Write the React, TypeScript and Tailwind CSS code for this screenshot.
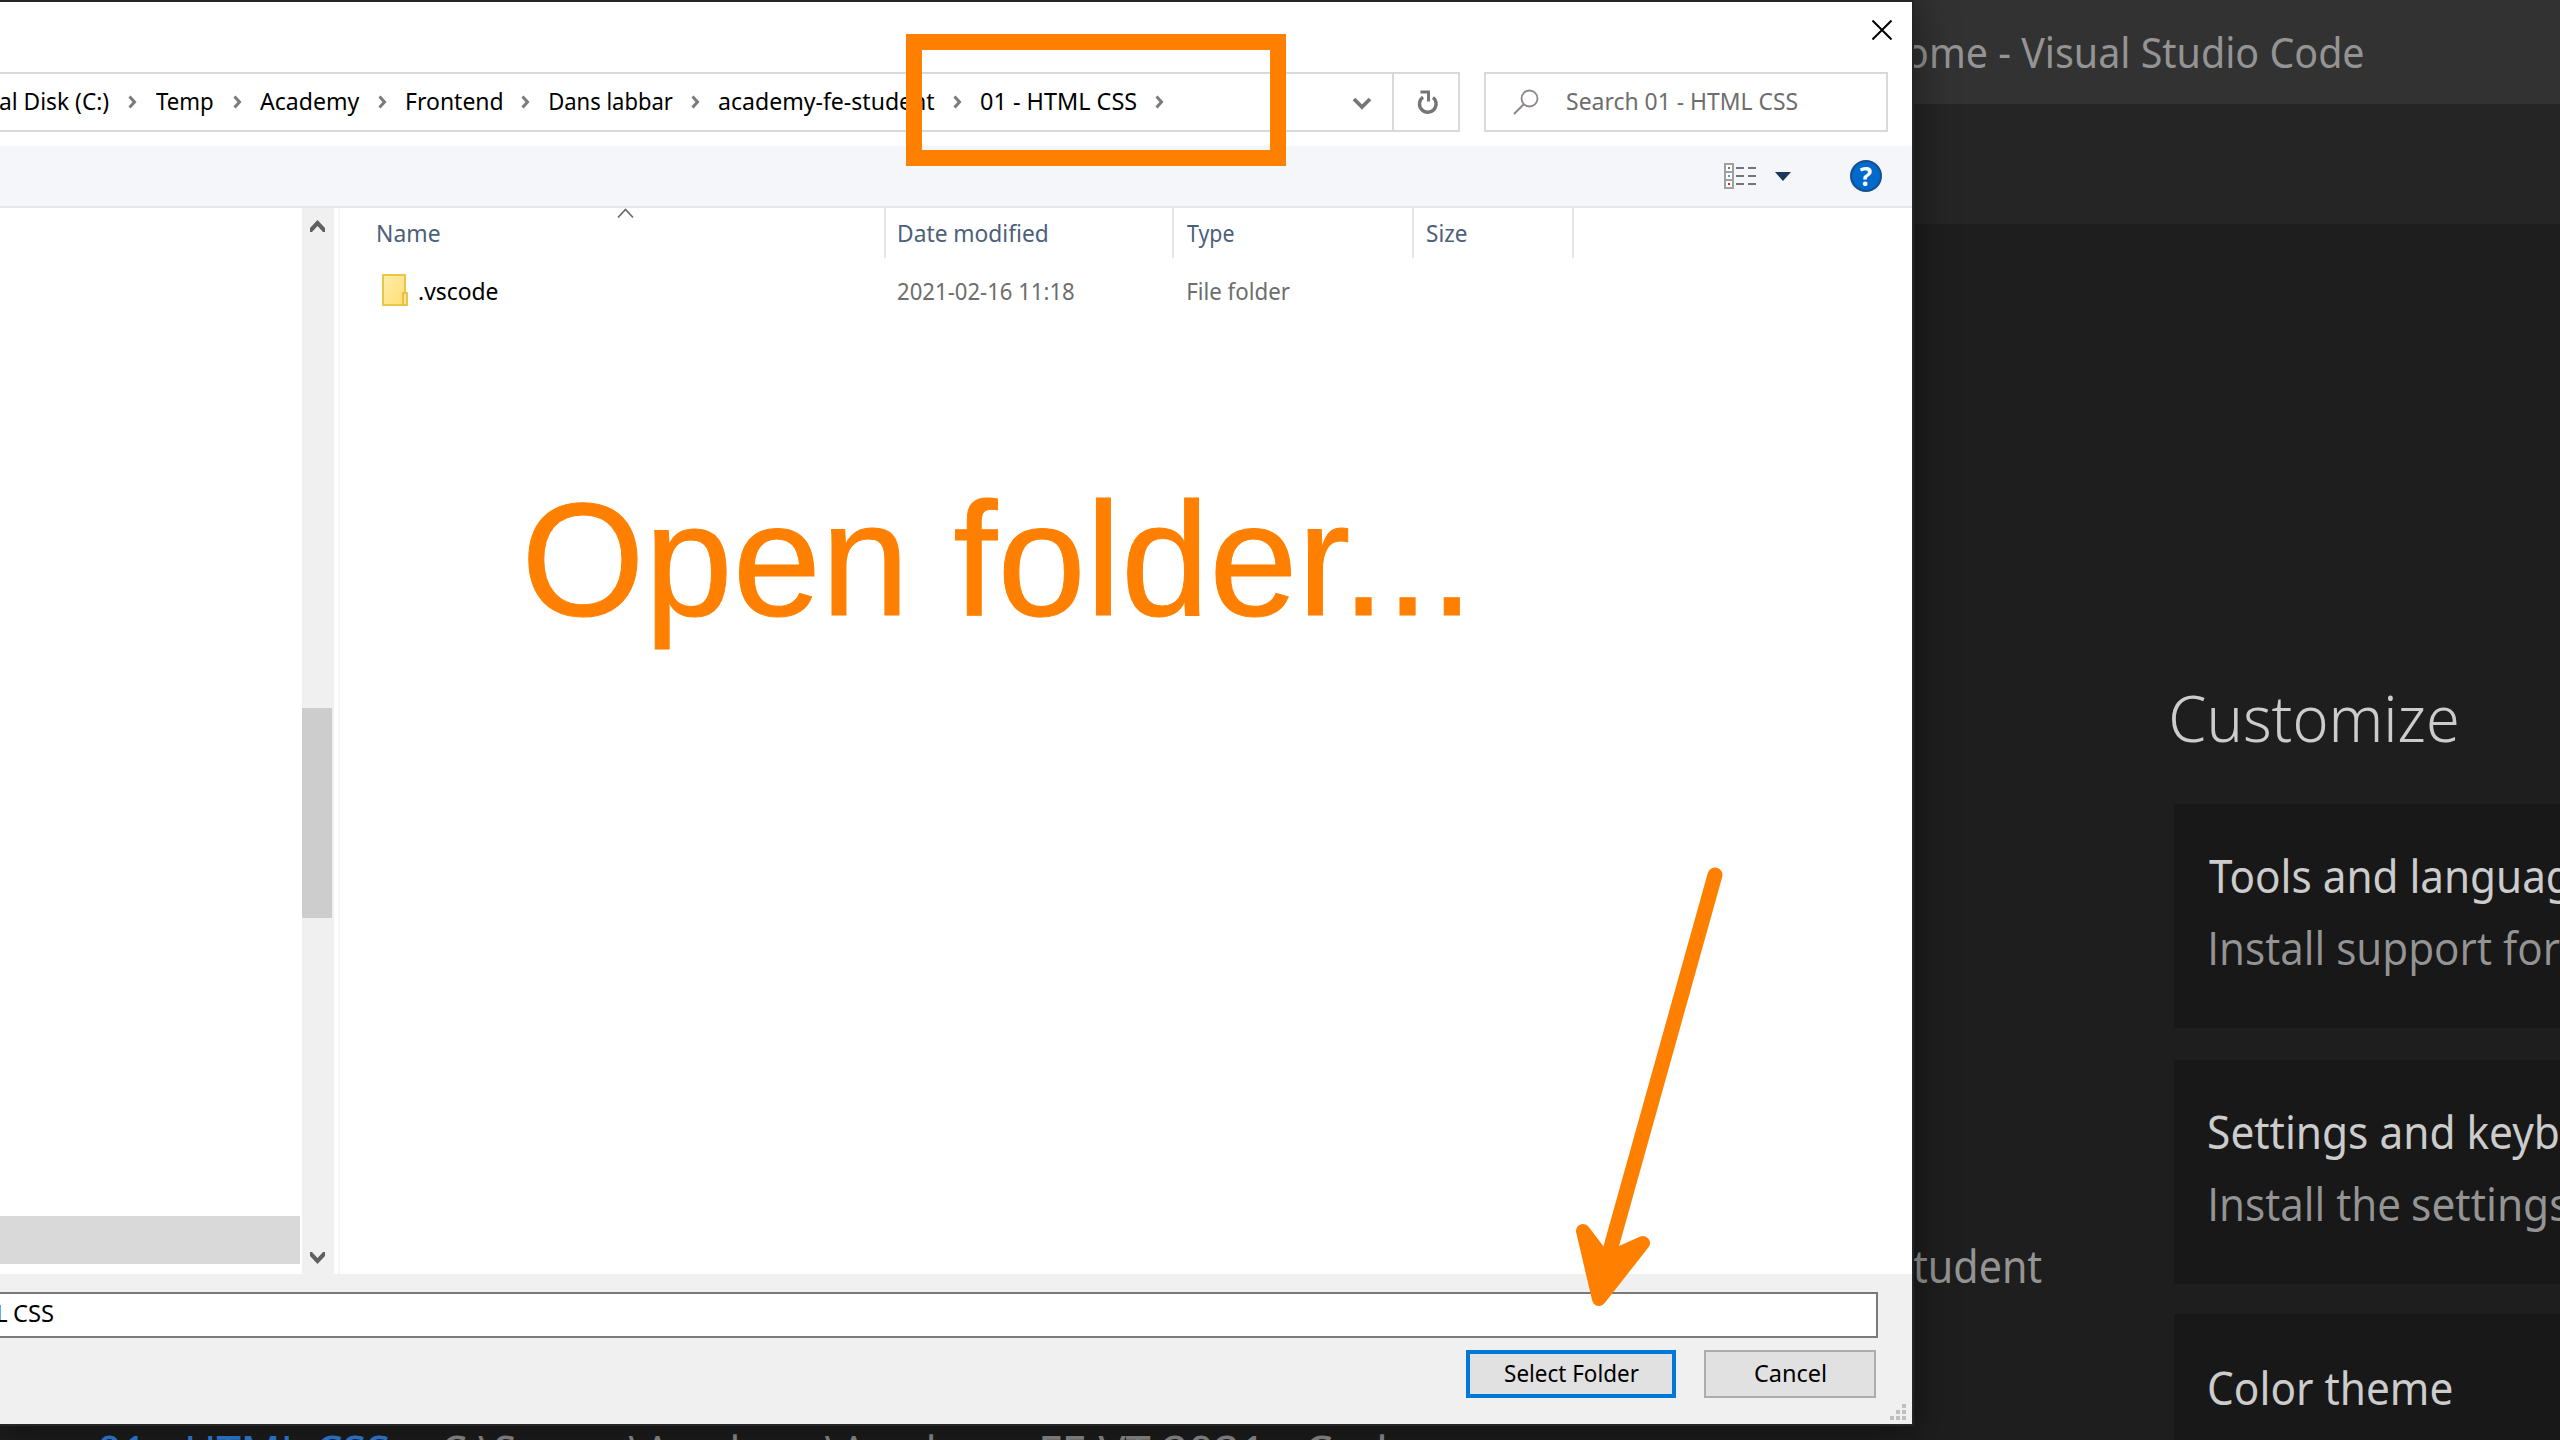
import React, { useLayoutEffect, useRef } from "react";

// Scales a line of text horizontally so that its ink fills the box it sits in.
// When `probe` is given, that leading part of the text fills the box instead.
function Fit({
  children,
  className = "",
  probe,
}: {
  children: string;
  className?: string;
  probe?: string;
}) {
  const box = useRef<HTMLSpanElement>(null);
  const ink = useRef<HTMLSpanElement>(null);
  useLayoutEffect(() => {
    const b = box.current;
    const t = ink.current;
    const ctx = document.createElement("canvas").getContext("2d");
    if (!b || !t || !ctx) return;
    const cs = getComputedStyle(t);
    ctx.font = `${cs.fontWeight} ${cs.fontSize} ${cs.fontFamily}`;
    const m = ctx.measureText(probe ?? children);
    const scale = b.clientWidth / (m.actualBoundingBoxLeft + m.actualBoundingBoxRight);
    t.style.transform = `translateX(${m.actualBoundingBoxLeft * scale}px) scaleX(${scale})`;
  }, [children, probe]);
  return (
    <span ref={box} className={"block shrink-0 whitespace-nowrap " + className}>
      <span ref={ink} className="inline-block origin-left">
        {children}
      </span>
    </span>
  );
}

function Crumb({ className }: { className: string }) {
  return (
    <svg className={"mt-[3px] shrink-0 " + className} width="9" height="14" viewBox="0 0 9 14" fill="none">
      <path d="M1.5 1.5 L6.5 7 L1.5 12.5" stroke="#7a7a7a" strokeWidth="3" />
    </svg>
  );
}

function AddressBar() {
  return (
    <div className="flex h-[60px]">
      <div className="flex w-[1394px] items-center border-y-2 border-r-2 border-[#d9d9d9] text-[24px] leading-[30px] text-black">
        <div className="flex items-center pb-[3px]">
          <Fit className="w-[109px]">al Disk (C:)</Fit>
          <Crumb className="ml-[19px]" />
          <Fit className="ml-[19px] w-[57px]">Temp</Fit>
          <Crumb className="ml-[20px]" />
          <Fit className="ml-[18px] w-[100px]">Academy</Fit>
          <Crumb className="ml-[18px]" />
          <Fit className="ml-[20px] w-[95px]">Frontend</Fit>
          <Crumb className="ml-[19px]" />
          <Fit className="ml-[20px] w-[123px]">Dans labbar</Fit>
          <Crumb className="ml-[18px]" />
          <Fit className="ml-[19px] w-[216px]">academy-fe-student</Fit>
          <Crumb className="ml-[18px]" />
          <Fit className="ml-[19px] w-[156px]">01 - HTML CSS</Fit>
          <Crumb className="ml-[18px]" />
        </div>
        <svg className="mt-[4px] mr-[20px] ml-auto" width="20" height="14" viewBox="0 0 20 14" fill="none">
          <path d="M2 2 L10 10 L18 2" stroke="#777" strokeWidth="3.8" />
        </svg>
      </div>
      <div className="flex w-[66px] items-center justify-center border-y-2 border-r-2 border-[#d9d9d9] pl-[4px]">
        <svg className="mt-[1px]" width="22" height="25" viewBox="0 0 22 25" fill="none" stroke="#757575">
          <path d="M16 7.5 A8.3 8.3 0 1 1 6 7.2" strokeWidth="3.4" />
          <path d="M3.5 2 H11.5 V11.5" strokeWidth="3" />
        </svg>
      </div>
      <div className="ml-[24px] flex w-[404px] items-center border-2 border-[#d9d9d9] pb-[3px] pl-[27px] text-[24px] leading-[30px] text-[#6d6d6d]">
        <svg className="mt-[3px]" width="26" height="26" viewBox="0 0 26 26" fill="none" stroke="#8f8790">
          <circle cx="16.5" cy="9.5" r="8" strokeWidth="1.8" />
          <path d="M10.8 15.2 L1 25" strokeWidth="2" />
        </svg>
        <Fit className="ml-[28px] w-[231px]">Search 01 - HTML CSS</Fit>
      </div>
    </div>
  );
}

function Toolbar() {
  return (
    <div className="mt-[14px] flex h-[62px] items-center border-b-2 border-[#e6e8ea] bg-[#f4f6f9]">
      <svg className="ml-[1724px]" width="32" height="26" viewBox="0 0 32 26" shapeRendering="crispEdges">
        <g fill="#fff" stroke="#a0a0a0" strokeWidth="2">
          <rect x="1" y="1" width="8" height="8" />
          <rect x="1" y="9" width="8" height="8" />
          <rect x="1" y="17" width="8" height="8" />
        </g>
        <rect x="4" y="4" width="2" height="2" fill="#4f8a62" />
        <rect x="4" y="12" width="2" height="2" fill="#5b9bf0" />
        <rect x="4" y="20" width="2" height="2" fill="#e0241b" />
        <g fill="#757575">
          <rect x="12" y="4" width="8" height="2" />
          <rect x="24" y="4" width="8" height="2" />
          <rect x="12" y="12" width="8" height="2" />
          <rect x="24" y="12" width="8" height="2" />
          <rect x="12" y="20" width="8" height="2" />
          <rect x="24" y="20" width="8" height="2" />
        </g>
      </svg>
      <svg className="ml-[18px]" width="18" height="9" viewBox="0 0 18 9">
        <path d="M1 0 H17 L9 9 Z" fill="#1e395b" />
      </svg>
      <div className="ml-[58px] flex size-[32px] items-center justify-center rounded-full border-2 border-[#15508c] bg-[#0069cb] font-['Open_Sans'] text-[26px] leading-[28px] font-bold text-white">
        ?
      </div>
    </div>
  );
}

function Tree() {
  return (
    <div className="flex w-[340px] border-r-2 border-[#f6f6f6]">
      <div className="flex w-[302px] flex-col justify-end pb-[10px]">
        <div className="h-[48px] w-[300px] bg-[#d9d9d9]" />
      </div>
      <div className="flex w-[32px] flex-col bg-[#f0f0f0]">
        <svg className="mt-[12px] ml-[8px]" width="15" height="12" viewBox="0 0 15 12">
          <path d="M7.5 0 L15 8 V12 H13 L7.5 6 L2 12 H0 V8 Z" fill="#606060" />
        </svg>
        <div className="mt-[476px] h-[210px] w-[30px] bg-[#cdcdcd]" />
        <svg className="mt-auto mb-[10px] ml-[8px]" width="15" height="12" viewBox="0 0 15 12">
          <path d="M7.5 12 L15 4 V0 H13 L7.5 6 L2 0 H0 V4 Z" fill="#606060" />
        </svg>
      </div>
    </div>
  );
}

function FileList() {
  return (
    <div className="relative flex-1 text-[24px] leading-[30px]">
      <div className="flex h-[50px] text-[#4c607a]">
        <div className="flex w-[546px] border-r-2 border-[#e5e5e5] pt-[10px] pl-[38px]">
          <Fit className="w-[62px]">Name</Fit>
        </div>
        <div className="flex w-[288px] border-r-2 border-[#e5e5e5] pt-[10px] pl-[13px]">
          <Fit className="w-[148px]">Date modified</Fit>
        </div>
        <div className="flex w-[240px] border-r-2 border-[#e5e5e5] pt-[10px] pl-[13px]">
          <Fit className="w-[47px]">Type</Fit>
        </div>
        <div className="flex w-[160px] border-r-2 border-[#e5e5e5] pt-[10px] pl-[13px]">
          <Fit className="w-[40px]">Size</Fit>
        </div>
      </div>
      <svg className="absolute top-0 left-[277px]" width="17" height="11" viewBox="0 0 17 11" fill="none">
        <path d="M1 9.5 L8.5 1.5 L16 9.5" stroke="#6d6d6d" strokeWidth="1.8" />
      </svg>
      <div className="mt-[16px] flex h-[34px] items-start text-[#6d6d6d]">
        <svg className="ml-[42px]" width="26" height="32" viewBox="0 0 26 32">
          <defs>
            <linearGradient id="folder" x1="0" y1="0" x2="1" y2="1">
              <stop offset="0" stopColor="#ffeda6" />
              <stop offset="1" stopColor="#ffdd77" />
            </linearGradient>
          </defs>
          <rect x="1" y="1" width="22" height="30" fill="url(#folder)" stroke="#ebc544" strokeWidth="2" />
          <rect x="21" y="19" width="4" height="12" fill="#ffe48c" stroke="#e8bf3c" strokeWidth="1.8" />
        </svg>
        <Fit className="mt-[2px] ml-[11px] w-[79px] text-black">.vscode</Fit>
        <Fit className="mt-[2px] ml-[400px] w-[176px]">2021-02-16 11:18</Fit>
        <Fit className="mt-[2px] ml-[114px] w-[102px]">File folder</Fit>
      </div>
      <div className="mt-[161px] ml-[188px] font-['Liberation_Sans'] text-[162px] leading-[180px] text-[#ff8000] [-webkit-text-stroke:1px_#ff8000]">
        <Fit className="w-[932px]">Open folder...</Fit>
      </div>
    </div>
  );
}

function Footer() {
  return (
    <div className="relative h-[150px] bg-[#f0f0f0] pt-[18px] text-[24px] leading-[30px] text-black">
      <div className="flex h-[46px] w-[1878px] border-y-2 border-r-2 border-[#7a7a7a] bg-white pt-[4px]">
        <Fit className="-ml-[2px] w-[9px]">L</Fit>
        <Fit className="ml-[7px] w-[40px]">CSS</Fit>
      </div>
      <div className="mt-[12px] flex h-[48px]">
        <div className="ml-[1466px] flex w-[210px] border-4 border-[#0078d7] bg-[#e1e1e1] pt-[4px] pl-[35px]">
          <Fit className="w-[134px]">Select Folder</Fit>
        </div>
        <div className="ml-[28px] flex w-[172px] border-2 border-[#adadad] bg-[#e1e1e1] pt-[6px] pl-[49px]">
          <Fit className="w-[71px]">Cancel</Fit>
        </div>
      </div>
      <div className="absolute right-[6px] bottom-[4px] grid grid-cols-3 gap-[2px]">
        {[0, 0, 1, 0, 1, 1, 1, 1, 1].map((on, i) => (
          <div key={i} className={on ? "size-[4px] bg-[#bfbfbf]" : "size-[4px]"} />
        ))}
      </div>
    </div>
  );
}

function Dialog() {
  return (
    <div className="absolute top-0 left-0 flex h-[1426px] w-[1914px] flex-col border-y-2 border-r-2 border-[#262525] bg-white shadow-[0_6px_36px_4px_rgba(0,0,0,0.4)]">
      <div className="flex h-[70px] justify-end pt-[18px] pr-[20px]">
        <svg width="20" height="20" viewBox="0 0 20 20">
          <path d="M0.5 0.5 L19.5 19.5 M19.5 0.5 L0.5 19.5" stroke="#000" strokeWidth="2" />
        </svg>
      </div>
      <AddressBar />
      <Toolbar />
      <div className="flex h-[1066px]">
        <Tree />
        <FileList />
      </div>
      <Footer />
    </div>
  );
}

function Card({ children }: { children: React.ReactNode }) {
  return <div className="h-[224px] bg-[#181818] pt-[42px] pl-[35px] text-[#cccccc]">{children}</div>;
}

function Editor() {
  return (
    <div className="h-[1440px] w-[2560px] overflow-hidden bg-[#1e1e1e] text-[45px] leading-[60px]">
      <div className="flex h-[104px] bg-[#323233] pt-[22px] pl-[1907px] text-[42px] text-[#949494]">
        <Fit className="w-[456px]">ome - Visual Studio Code</Fit>
      </div>
      <div className="h-[120px] bg-[#252526]" />
      <div className="flex h-[1216px]">
        <div className="w-[2174px] shrink-0 pt-[1012px] text-[#949494]">
          <Fit className="ml-[1913px] w-[129px]">tudent</Fit>
          <div className="mt-[126px] flex">
            <Fit className="ml-[99px] w-[290px] text-[#3185e8]">01 - HTML CSS</Fit>
            <Fit className="ml-[53px] w-[579px]">C:\Source\Academy\Academy</Fit>
            <Fit className="ml-[21px] w-[370px]">FE VT 2021 - Code</Fit>
          </div>
        </div>
        <div className="w-[386px] shrink-0 pt-[453px]">
          <Fit className="-ml-[2px] h-[127px] w-[285px] text-[65px] leading-[80px] font-light text-[#cccccc]">
            Customize
          </Fit>
          <Card>
            <Fit className="w-[186px]" probe="Tools and">
              Tools and languages
            </Fit>
            <div className="mt-[12px] pl-[2px] font-['Open_Sans'] text-[#949494]">
              <Fit className="w-[280px]" probe="Install support">
                Install support for JavaScript
              </Fit>
            </div>
          </Card>
          <div className="h-[32px]" />
          <Card>
            <Fit className="w-[243px]" probe="Settings and">
              Settings and keybindings
            </Fit>
            <div className="mt-[12px] flex pl-[2px] text-[#949494]">
              <Fit className="w-[188px] font-['Open_Sans']">Install the</Fit>
              <Fit className="ml-[14px] w-[155px]">settings</Fit>
            </div>
          </Card>
          <div className="h-[30px]" />
          <Card>
            <Fit className="mt-[2px] w-[243px]">Color theme</Fit>
          </Card>
        </div>
      </div>
    </div>
  );
}

// Orange frame and arrow drawn over the dialog.
function Annotations() {
  return (
    <>
      <div className="absolute top-[34px] left-[906px] h-[132px] w-[380px] border-[16px] border-[#ff8000]" />
      <svg
        className="absolute top-[860px] left-[1570px]"
        width="160"
        height="450"
        viewBox="1570 860 160 450"
        fill="#ff8000"
        stroke="#ff8000"
        strokeLinecap="round"
        strokeLinejoin="round"
      >
        <path d="M1715 875 L1599 1290" strokeWidth="15" fill="none" />
        <path d="M1583 1231 L1605 1260 L1643 1243 L1599 1299 Z" strokeWidth="14" />
      </svg>
    </>
  );
}

export default function App() {
  return (
    <div className="relative h-[1440px] w-[2560px] overflow-hidden font-['Noto_Sans',sans-serif]">
      <Editor />
      <Dialog />
      <Annotations />
    </div>
  );
}
